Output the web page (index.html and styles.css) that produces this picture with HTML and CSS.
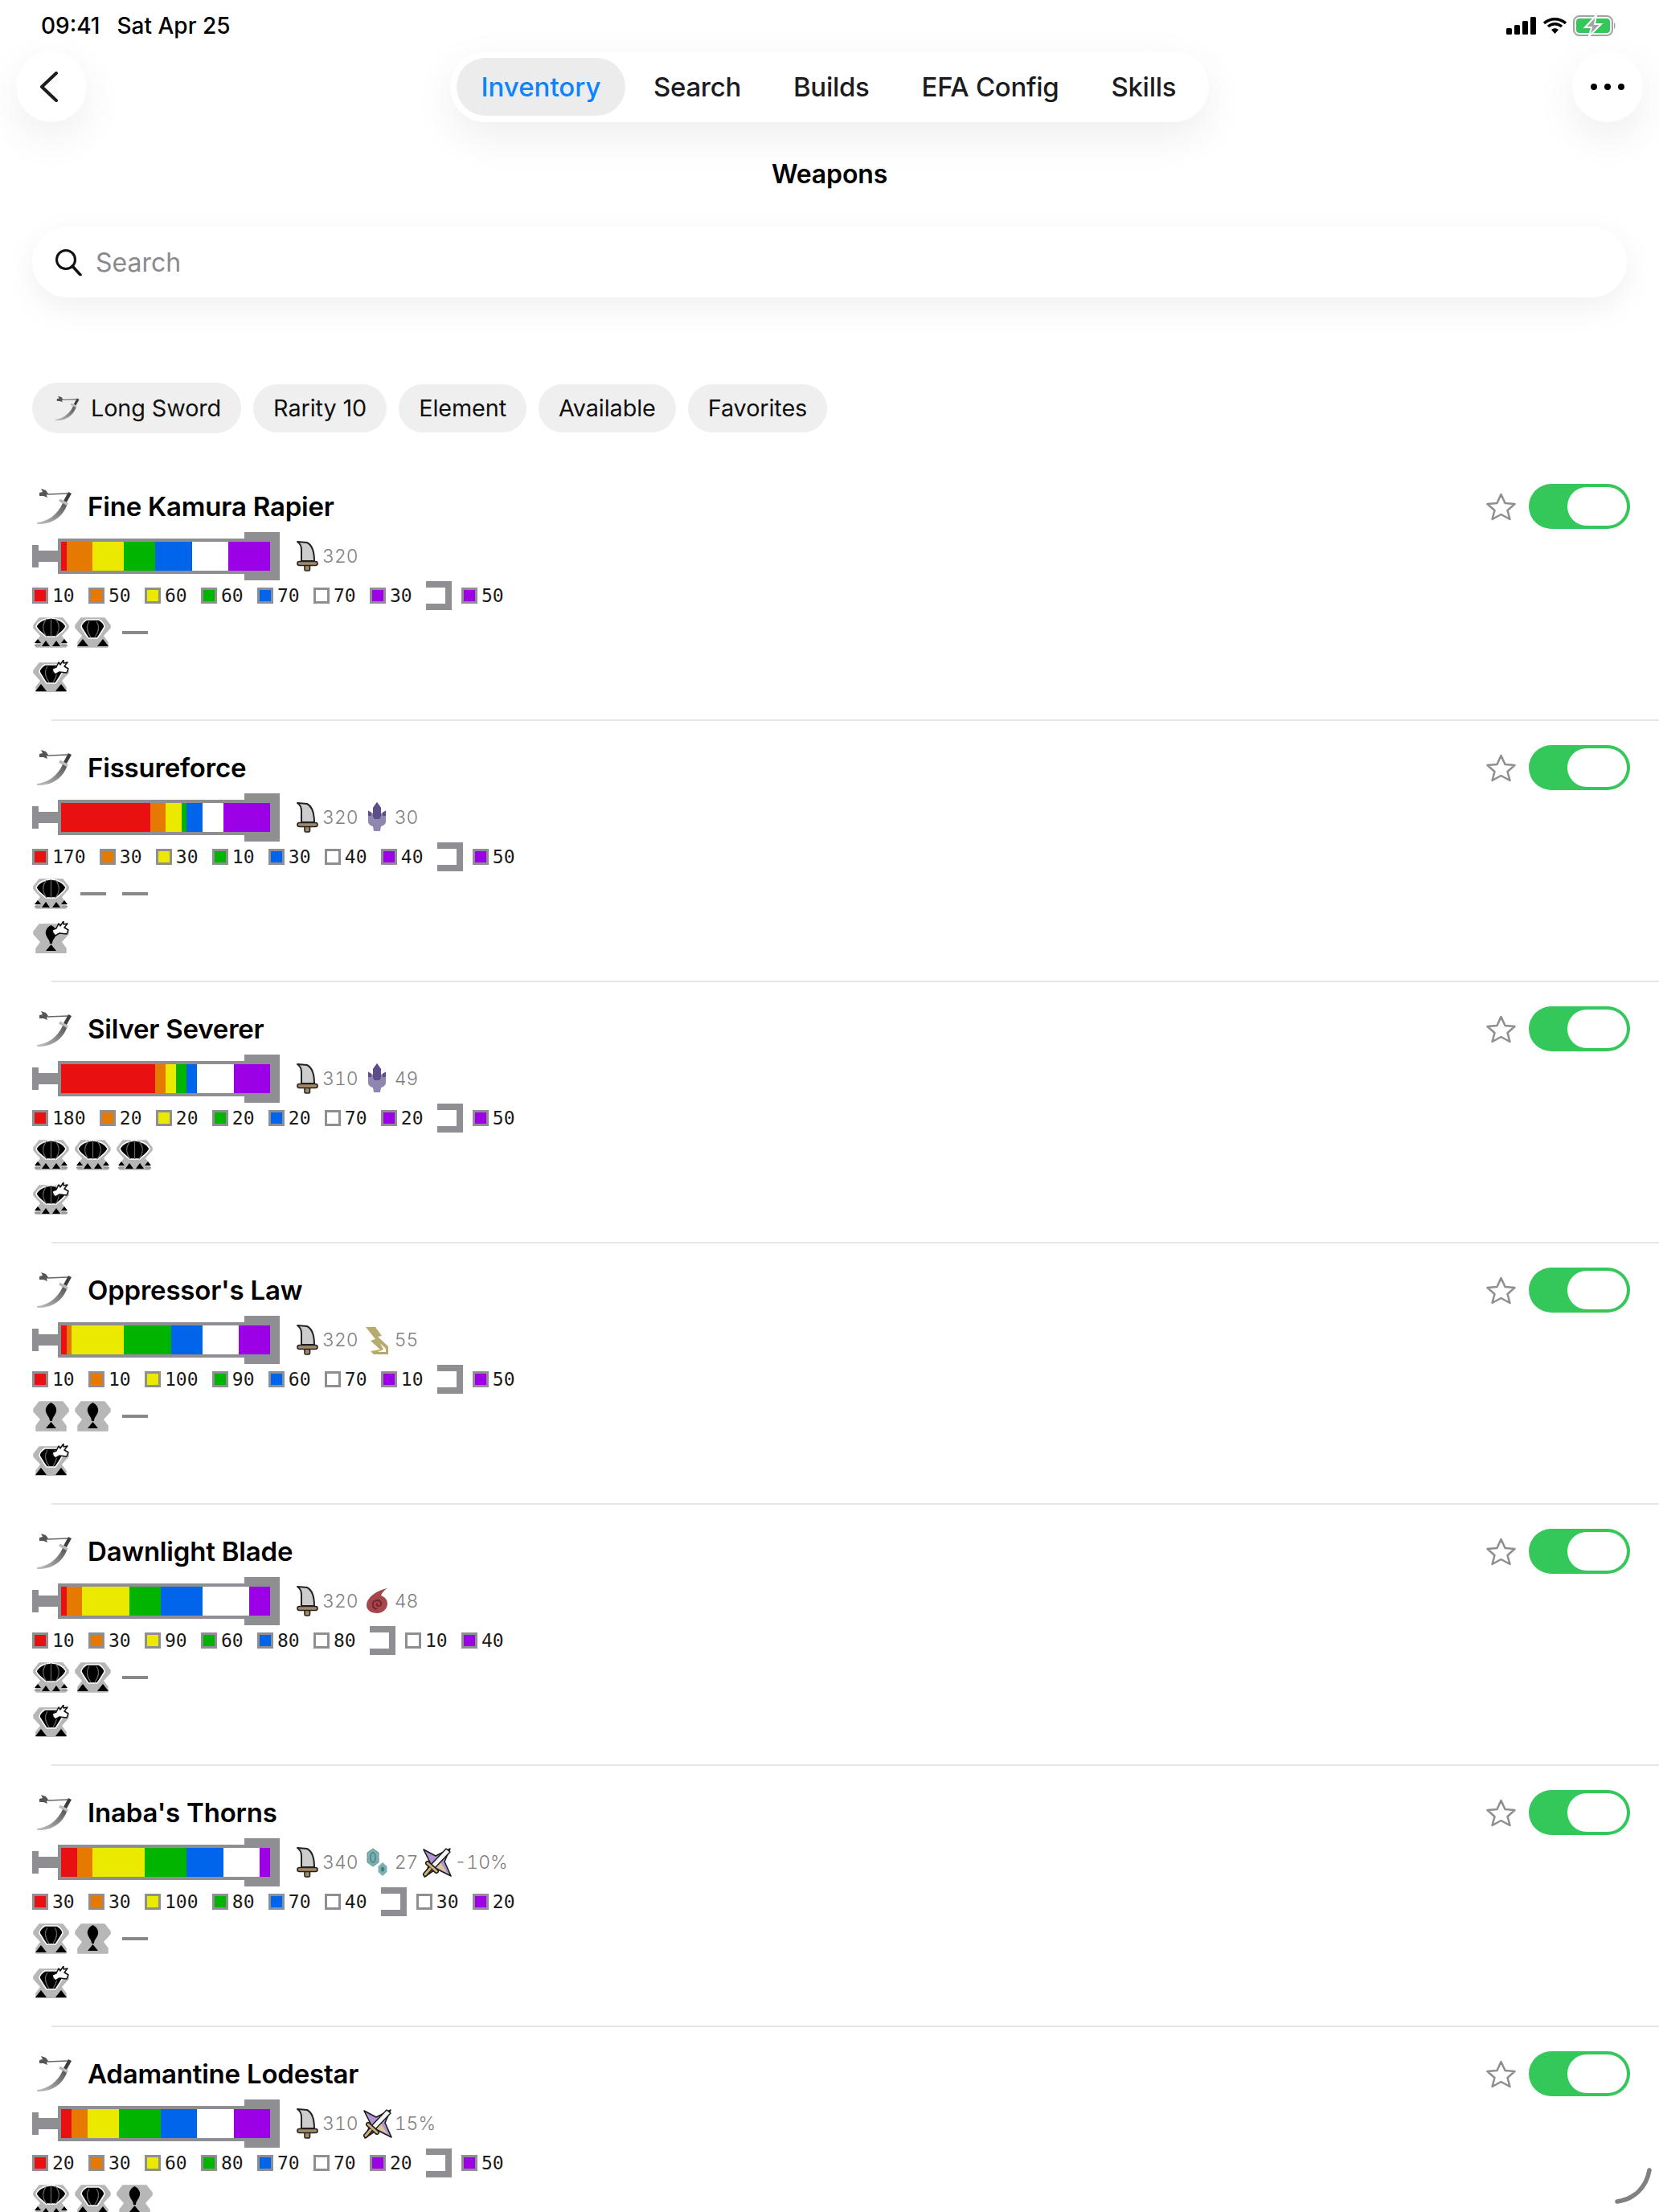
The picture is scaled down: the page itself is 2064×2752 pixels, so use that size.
FILE: index.html
```html
<!DOCTYPE html>
<html lang="en">
<head>
    <meta charset="UTF-8">
    <title>Weapons</title>
    <link rel="stylesheet" href="styles.css">
</head>
<body>
<svg class="defs" width="0" height="0">
    <defs>
        <linearGradient id="bladeGrad" x1="1" y1="0" x2="0" y2="1">
            <stop offset="0" stop-color="#555"/>
            <stop offset="1" stop-color="#c4c4c4"/>
        </linearGradient>
    </defs>
    <symbol id="ls" viewBox="0 0 46 46">
        <path d="M4 6 8 5 6 1 12 3 15 7 13 9 14 12 9 10 4 10Z" fill="#555"/>
        <path d="M14 8 39 7" stroke="#666" stroke-width="1.600" fill="none"/>
        <path d="M42 6 36 17" stroke="#3e3e3e" stroke-width="4.500" fill="none"/>
        <path d="M29 15 39 21" stroke="#b9b9b9" stroke-width="3.500" fill="none"/>
        <path d="M33 19 38 22C33 36 19 46 1 45L1 43C14 42 27 33 33 19Z" fill="url(#bladeGrad)"/>
    </symbol>
    <symbol id="sword" viewBox="0 0 27 38">
        <path d="M1 1 13 2C19 5 22 14 22 25H6V11C6 7 4 3 1 1Z" fill="#cdcdcd" stroke="#222" stroke-width="2" stroke-linejoin="round"/>
        <rect x="10" y="30" width="6.500" height="7" rx="1.500" fill="#a58a68" stroke="#222" stroke-width="1.600"/>
        <rect x="1" y="25.500" width="25" height="5" rx="2.500" fill="#a58a68" stroke="#222" stroke-width="1.600"/>
    </symbol>
    <symbol id="dragon" viewBox="0 0 40 40">
        <path d="M20 1 25 8V15L31 11.500V25C31 29 26 31 25 31L24 37H16L15 31C14 31 9 29 9 25V11.500L15 15V8Z" fill="#8f87b0"/>
        <path d="M20 1 25 8V19L23 22H17L15 19V8ZM9 11.500 13 14V18H9ZM31 11.500 27 14V18H31Z" fill="#5d4e89"/>
    </symbol>
    <symbol id="thunder" viewBox="0 0 40 40">
        <path d="M6 4H18L26 15 21 16 34 28V38H16L12 34 24 32 12 21 18 19Z" fill="#b6aa6c"/>
        <path d="M24 24 31 31V35H21L28 32Z" fill="#fff"/>
    </symbol>
    <symbol id="fire" viewBox="0 0 40 40">
        <path d="M33 4C26 5 8 12 7 25 7 32 14 35 20 35 28 35 33 29 33 23 33 17 28 14 25 13 26 10 29 6 33 4Z" fill="#a5464c"/>
        <path d="M20 30C13 29 13 20 20 19 26 19 27 26 22 26 19 26 19 23 21 23" fill="none" stroke="#74262c" stroke-width="2"/>
    </symbol>
    <symbol id="ice" viewBox="0 0 40 40">
        <path d="M15 3 22 8V20L15 25 8 20V8Z" fill="#7fb0b0" stroke="#5f9696" stroke-width="1"/>
        <ellipse cx="15" cy="14" rx="3" ry="6" fill="none" stroke="#4f8c8c" stroke-width="2"/>
        <path d="M27 20 32.500 25V32L27 37 21.500 32V25Z" fill="#7fb0b0"/>
        <ellipse cx="27" cy="28.500" rx="2" ry="3" fill="#3f7f7f"/>
    </symbol>
    <symbol id="affinity" viewBox="0 0 40 40">
        <path d="M4 4 19 12 37 3 30 19 38 37 20 28 5 38 12 20Z" fill="#b094d4" stroke="#1c1c1c" stroke-width="1.600" stroke-linejoin="round"/>
        <path d="M30 11 25 20 33 33 20 26 13 29Z" fill="#dcc992"/>
        <path d="M32 3 37 7 18 27 13 23Z" fill="#f5f5f5" stroke="#1c1c1c" stroke-width="1.500" stroke-linejoin="round"/>
        <path d="M9 21 20 31M12 28 6 35" fill="none" stroke="#1c1c1c" stroke-width="6" stroke-linecap="round"/>
        <path d="M9 21 20 31M12 28 6 35" fill="none" stroke="#cdaf7c" stroke-width="3" stroke-linecap="round"/>
    </symbol>
    <symbol id="slotbase" viewBox="0 0 45 38">
        <path d="M8 1H37L44 10V13L35 23 41 31V37H4V31L10 23 1 13V10Z" fill="#b7b7b7" stroke="#b7b7b7" stroke-width="1.500" stroke-linejoin="round"/>
    </symbol>
    <symbol id="slot1" viewBox="0 0 45 38">
        <use href="#slotbase" width="45" height="38"/>
        <path d="M22.500 2C27 4 30 9 29 13 28 18 24 20 24 25H21C21 20 17 18 16 13 15 9 18 4 22.500 2Z"/>
        <path d="M22.500 26 29 34H16Z"/>
    </symbol>
    <symbol id="slot2" viewBox="0 0 45 38">
        <use href="#slotbase" width="45" height="38"/>
        <path d="M15 3H30C34 5 37 9 37 12 34 17 31 22 28 26H17C14 22 11 17 8 12 8 9 11 5 15 3Z" stroke="#fff" stroke-width="1.500"/>
        <path d="M18 5C14 11 15 18 20 25M27 5C31 11 30 18 25 25" fill="none" stroke="#666" stroke-width="1.200"/>
        <path d="M10 27 17 36H3ZM35 27 42 36H28Z"/>
    </symbol>
    <symbol id="slot3" viewBox="0 0 45 38">
        <use href="#slotbase" width="45" height="38"/>
        <path d="M22.500 1C30 1 38 5 41 11 40 16 33 20 29 24H16C12 20 5 16 4 11 7 5 15 1 22.500 1Z" stroke="#fff" stroke-width="1.500"/>
        <path d="M17 2C11 9 12 17 17 24M28 2C34 9 33 17 28 24M22.500 1V24" fill="none" stroke="#666" stroke-width="1.200"/>
        <path d="M6 27 10 32H2ZM16 29 21 36H11ZM29 29 34 36H24ZM39 27 43 32H35Z"/>
        <path d="M2 34H9V36H2ZM36 34H43V36H36Z" fill="#999"/>
    </symbol>
    <symbol id="ramp1" viewBox="0 -3 45 40">
        <use href="#slot1" y="0" width="45" height="38"/>
        <path d="M24 8 29 6 32 0 34 3 38 -3 38 1 43 0 39 5 44 8 42 13 33 12 28 15 25 12Z" fill="#fff" stroke="#111" stroke-width="1.500" stroke-linejoin="round"/>
    </symbol>
    <symbol id="ramp2" viewBox="0 -3 45 40">
        <use href="#slot2" y="0" width="45" height="38"/>
        <path d="M24 8 29 6 32 0 34 3 38 -3 38 1 43 0 39 5 44 8 42 13 33 12 28 15 25 12Z" fill="#fff" stroke="#111" stroke-width="1.500" stroke-linejoin="round"/>
    </symbol>
    <symbol id="ramp3" viewBox="0 -3 45 40">
        <use href="#slot3" y="0" width="45" height="38"/>
        <path d="M24 8 29 6 32 0 34 3 38 -3 38 1 43 0 39 5 44 8 42 13 33 12 28 15 25 12Z" fill="#fff" stroke="#111" stroke-width="1.500" stroke-linejoin="round"/>
    </symbol>
    <symbol id="star" viewBox="0 0 37 35">
        <path d="M18.500 2 23.500 13 35.500 14 26.500 22 29.500 33 18.500 27 7.500 33 10.500 22 1.500 14 13.500 13Z" fill="#fff" stroke="#8e8e93" stroke-width="2.500" stroke-linejoin="round"/>
    </symbol>
</svg>

<div class="page">
    <div class="status">
        <div class="clock"><span>09:41</span><span>Sat Apr 25</span></div>
        <div class="status-icons">
            <svg width="38" height="22" viewBox="0 0 38 22"><rect x="0" y="14" width="7" height="8" rx="1.500"/><rect x="10" y="10" width="7" height="12" rx="1.500"/><rect x="20" y="5" width="7" height="17" rx="1.500"/><rect x="30" y="0" width="7" height="22" rx="1.500"/></svg>
            <svg width="29" height="20" viewBox="0 0 29 20"><path d="M1 7C9 0 20 0 28 7" fill="none" stroke="#000" stroke-width="3.500"/><path d="M6 11C11 6.500 18 6.500 23 11" fill="none" stroke="#000" stroke-width="3.500"/><path d="M14.500 20 10 15C13 12.500 16 12.500 19 15Z"/></svg>
            <svg width="54" height="26" viewBox="0 0 54 26">
                <rect x="1" y="1" width="48" height="24" rx="7" fill="#fff" stroke="#a3a3a3" stroke-width="2"/>
                <rect x="4" y="4" width="42" height="18" rx="4" fill="#34c759"/>
                <path d="M51 9C53 10 53 16 51 17Z" fill="#a3a3a3"/>
                <path d="M29 0 15 15H23L20 26 35 11H27Z" fill="#a3a3a3" stroke="#fff" stroke-width="2"/>
            </svg>
        </div>
    </div>

    <div class="nav">
        <button class="round-btn">
            <svg class="back-icon" width="24" height="38" viewBox="0 0 24 38"><path d="M20 2 2 19 20 36" fill="none" stroke="#1c1c1e" stroke-width="4" stroke-linecap="round" stroke-linejoin="round"/></svg>
        </button>
        <div class="tabs">
            <span class="tab active">Inventory</span>
            <span class="tab">Search</span>
            <span class="tab">Builds</span>
            <span class="tab">EFA Config</span>
            <span class="tab">Skills</span>
        </div>
        <button class="round-btn">
            <svg width="42" height="8" viewBox="0 0 42 8"><circle cx="4" cy="4" r="4"/><circle cx="21" cy="4" r="4"/><circle cx="38" cy="4" r="4"/></svg>
        </button>
    </div>

    <h1 class="page-title">Weapons</h1>

    <div class="search">
        <svg width="34" height="34" viewBox="0 0 34 34"><circle cx="14" cy="14" r="11.500" fill="none" stroke="#111" stroke-width="3"/><path d="M22 22 32 33" stroke="#111" stroke-width="3.500" stroke-linecap="round"/></svg>
        <span>Search</span>
    </div>

    <div class="chips">
        <span class="chip first"><svg class="chip-icon"><use href="#ls"/></svg>Long Sword</span>
        <span class="chip">Rarity 10</span>
        <span class="chip">Element</span>
        <span class="chip">Available</span>
        <span class="chip">Favorites</span>
    </div>

    <!-- weapons -->
    <div class="weapon">
        <div class="head">
            <div class="name"><svg class="type-icon"><use href="#ls"/></svg>Fine Kamura Rapier</div>
            <div class="actions"><svg class="star"><use href="#star"/></svg><span class="toggle"><i></i></span></div>
        </div>
        <div class="stats">
            <div class="bar"><i class="cap"></i><i class="stem"></i>
                <div class="tube"><i class="red" style="flex:10"></i><i class="orange" style="flex:50"></i><i class="yellow" style="flex:60"></i><i class="green" style="flex:60"></i><i class="blue" style="flex:70"></i><i class="white" style="flex:70"></i><i class="purple" style="flex:80"></i></div>
            </div>
            <svg class="atk-icon"><use href="#sword"/></svg><span class="val">320</span>
        </div>
        <div class="sharp">
            <span class="hit"><i class="red"></i>10</span><span class="hit"><i class="orange"></i>50</span><span class="hit"><i class="yellow"></i>60</span><span class="hit"><i class="green"></i>60</span><span class="hit"><i class="blue"></i>70</span><span class="hit"><i class="white"></i>70</span><span class="hit"><i class="purple"></i>30</span><i class="notch"></i><span class="hit"><i class="purple"></i>50</span>
        </div>
        <div class="slots"><svg class="slot"><use href="#slot3"/></svg><svg class="slot"><use href="#slot2"/></svg><span class="slot empty"></span></div>
        <svg class="ramp"><use href="#ramp2"/></svg>
    </div>
    <hr>

    <div class="weapon">
        <div class="head">
            <div class="name"><svg class="type-icon"><use href="#ls"/></svg>Fissureforce</div>
            <div class="actions"><svg class="star"><use href="#star"/></svg><span class="toggle"><i></i></span></div>
        </div>
        <div class="stats">
            <div class="bar"><i class="cap"></i><i class="stem"></i>
                <div class="tube"><i class="red" style="flex:170"></i><i class="orange" style="flex:30"></i><i class="yellow" style="flex:30"></i><i class="green" style="flex:10"></i><i class="blue" style="flex:30"></i><i class="white" style="flex:40"></i><i class="purple" style="flex:90"></i></div>
            </div>
            <svg class="atk-icon"><use href="#sword"/></svg><span class="val">320</span>
            <svg class="el-icon"><use href="#dragon"/></svg><span class="val">30</span>
        </div>
        <div class="sharp">
            <span class="hit"><i class="red"></i>170</span><span class="hit"><i class="orange"></i>30</span><span class="hit"><i class="yellow"></i>30</span><span class="hit"><i class="green"></i>10</span><span class="hit"><i class="blue"></i>30</span><span class="hit"><i class="white"></i>40</span><span class="hit"><i class="purple"></i>40</span><i class="notch"></i><span class="hit"><i class="purple"></i>50</span>
        </div>
        <div class="slots"><svg class="slot"><use href="#slot3"/></svg><span class="slot empty"></span><span class="slot empty"></span></div>
        <svg class="ramp"><use href="#ramp1"/></svg>
    </div>
    <hr>

    <div class="weapon">
        <div class="head">
            <div class="name"><svg class="type-icon"><use href="#ls"/></svg>Silver Severer</div>
            <div class="actions"><svg class="star"><use href="#star"/></svg><span class="toggle"><i></i></span></div>
        </div>
        <div class="stats">
            <div class="bar"><i class="cap"></i><i class="stem"></i>
                <div class="tube"><i class="red" style="flex:180"></i><i class="orange" style="flex:20"></i><i class="yellow" style="flex:20"></i><i class="green" style="flex:20"></i><i class="blue" style="flex:20"></i><i class="white" style="flex:70"></i><i class="purple" style="flex:70"></i></div>
            </div>
            <svg class="atk-icon"><use href="#sword"/></svg><span class="val">310</span>
            <svg class="el-icon"><use href="#dragon"/></svg><span class="val">49</span>
        </div>
        <div class="sharp">
            <span class="hit"><i class="red"></i>180</span><span class="hit"><i class="orange"></i>20</span><span class="hit"><i class="yellow"></i>20</span><span class="hit"><i class="green"></i>20</span><span class="hit"><i class="blue"></i>20</span><span class="hit"><i class="white"></i>70</span><span class="hit"><i class="purple"></i>20</span><i class="notch"></i><span class="hit"><i class="purple"></i>50</span>
        </div>
        <div class="slots"><svg class="slot"><use href="#slot3"/></svg><svg class="slot"><use href="#slot3"/></svg><svg class="slot"><use href="#slot3"/></svg></div>
        <svg class="ramp"><use href="#ramp3"/></svg>
    </div>
    <hr>

    <div class="weapon">
        <div class="head">
            <div class="name"><svg class="type-icon"><use href="#ls"/></svg>Oppressor's Law</div>
            <div class="actions"><svg class="star"><use href="#star"/></svg><span class="toggle"><i></i></span></div>
        </div>
        <div class="stats">
            <div class="bar"><i class="cap"></i><i class="stem"></i>
                <div class="tube"><i class="red" style="flex:10"></i><i class="orange" style="flex:10"></i><i class="yellow" style="flex:100"></i><i class="green" style="flex:90"></i><i class="blue" style="flex:60"></i><i class="white" style="flex:70"></i><i class="purple" style="flex:60"></i></div>
            </div>
            <svg class="atk-icon"><use href="#sword"/></svg><span class="val">320</span>
            <svg class="el-icon"><use href="#thunder"/></svg><span class="val">55</span>
        </div>
        <div class="sharp">
            <span class="hit"><i class="red"></i>10</span><span class="hit"><i class="orange"></i>10</span><span class="hit"><i class="yellow"></i>100</span><span class="hit"><i class="green"></i>90</span><span class="hit"><i class="blue"></i>60</span><span class="hit"><i class="white"></i>70</span><span class="hit"><i class="purple"></i>10</span><i class="notch"></i><span class="hit"><i class="purple"></i>50</span>
        </div>
        <div class="slots"><svg class="slot"><use href="#slot1"/></svg><svg class="slot"><use href="#slot1"/></svg><span class="slot empty"></span></div>
        <svg class="ramp"><use href="#ramp2"/></svg>
    </div>
    <hr>

    <div class="weapon">
        <div class="head">
            <div class="name"><svg class="type-icon"><use href="#ls"/></svg>Dawnlight Blade</div>
            <div class="actions"><svg class="star"><use href="#star"/></svg><span class="toggle"><i></i></span></div>
        </div>
        <div class="stats">
            <div class="bar"><i class="cap"></i><i class="stem"></i>
                <div class="tube"><i class="red" style="flex:10"></i><i class="orange" style="flex:30"></i><i class="yellow" style="flex:90"></i><i class="green" style="flex:60"></i><i class="blue" style="flex:80"></i><i class="white" style="flex:90"></i><i class="purple" style="flex:40"></i></div>
            </div>
            <svg class="atk-icon"><use href="#sword"/></svg><span class="val">320</span>
            <svg class="el-icon"><use href="#fire"/></svg><span class="val">48</span>
        </div>
        <div class="sharp">
            <span class="hit"><i class="red"></i>10</span><span class="hit"><i class="orange"></i>30</span><span class="hit"><i class="yellow"></i>90</span><span class="hit"><i class="green"></i>60</span><span class="hit"><i class="blue"></i>80</span><span class="hit"><i class="white"></i>80</span><i class="notch"></i><span class="hit"><i class="white"></i>10</span><span class="hit"><i class="purple"></i>40</span>
        </div>
        <div class="slots"><svg class="slot"><use href="#slot3"/></svg><svg class="slot"><use href="#slot2"/></svg><span class="slot empty"></span></div>
        <svg class="ramp"><use href="#ramp2"/></svg>
    </div>
    <hr>

    <div class="weapon">
        <div class="head">
            <div class="name"><svg class="type-icon"><use href="#ls"/></svg>Inaba's Thorns</div>
            <div class="actions"><svg class="star"><use href="#star"/></svg><span class="toggle"><i></i></span></div>
        </div>
        <div class="stats">
            <div class="bar"><i class="cap"></i><i class="stem"></i>
                <div class="tube"><i class="red" style="flex:30"></i><i class="orange" style="flex:30"></i><i class="yellow" style="flex:100"></i><i class="green" style="flex:80"></i><i class="blue" style="flex:70"></i><i class="white" style="flex:70"></i><i class="purple" style="flex:20"></i></div>
            </div>
            <svg class="atk-icon"><use href="#sword"/></svg><span class="val">340</span>
            <svg class="el-icon"><use href="#ice"/></svg><span class="val">27</span>
            <svg class="el-icon"><use href="#affinity"/></svg><span class="val">-10%</span>
        </div>
        <div class="sharp">
            <span class="hit"><i class="red"></i>30</span><span class="hit"><i class="orange"></i>30</span><span class="hit"><i class="yellow"></i>100</span><span class="hit"><i class="green"></i>80</span><span class="hit"><i class="blue"></i>70</span><span class="hit"><i class="white"></i>40</span><i class="notch"></i><span class="hit"><i class="white"></i>30</span><span class="hit"><i class="purple"></i>20</span>
        </div>
        <div class="slots"><svg class="slot"><use href="#slot2"/></svg><svg class="slot"><use href="#slot1"/></svg><span class="slot empty"></span></div>
        <svg class="ramp"><use href="#ramp2"/></svg>
    </div>
    <hr>

    <div class="weapon">
        <div class="head">
            <div class="name"><svg class="type-icon"><use href="#ls"/></svg>Adamantine Lodestar</div>
            <div class="actions"><svg class="star"><use href="#star"/></svg><span class="toggle"><i></i></span></div>
        </div>
        <div class="stats">
            <div class="bar"><i class="cap"></i><i class="stem"></i>
                <div class="tube"><i class="red" style="flex:20"></i><i class="orange" style="flex:30"></i><i class="yellow" style="flex:60"></i><i class="green" style="flex:80"></i><i class="blue" style="flex:70"></i><i class="white" style="flex:70"></i><i class="purple" style="flex:70"></i></div>
            </div>
            <svg class="atk-icon"><use href="#sword"/></svg><span class="val">310</span>
            <svg class="el-icon"><use href="#affinity"/></svg><span class="val">15%</span>
        </div>
        <div class="sharp">
            <span class="hit"><i class="red"></i>20</span><span class="hit"><i class="orange"></i>30</span><span class="hit"><i class="yellow"></i>60</span><span class="hit"><i class="green"></i>80</span><span class="hit"><i class="blue"></i>70</span><span class="hit"><i class="white"></i>70</span><span class="hit"><i class="purple"></i>20</span><i class="notch"></i><span class="hit"><i class="purple"></i>50</span>
        </div>
        <div class="slots"><svg class="slot"><use href="#slot3"/></svg><svg class="slot"><use href="#slot2"/></svg><svg class="slot"><use href="#slot1"/></svg></div>
    </div>

    <!-- scroll corner -->
    <svg class="scroll-arc" width="48" height="48" viewBox="0 0 48 48"><path d="M4 43C25 40 40 26 44 4" fill="none" stroke="#808080" stroke-width="5.500" stroke-linecap="round"/></svg>
</div>
</body>
</html>
```

FILE: styles.css
```css
html, body { margin: 0; height: 2752px; overflow: hidden; background: #fff; }
body { font-family: Inter, "Liberation Sans", sans-serif; color: #000; }
.defs { position: absolute; }
.page { position: relative; height: 2752px; overflow: hidden; }

.status { height: 64px; padding: 0 53px 0 51px; display: flex; justify-content: space-between; align-items: center; box-sizing: border-box; }
.clock { display: flex; gap: 21px; font-size: 28px; font-weight: 500; }
.status-icons { display: flex; align-items: center; gap: 8px; }

.nav { height: 88px; padding: 0 20px; display: flex; justify-content: space-between; }
.round-btn {
    width: 88px; height: 88px; padding: 0; border: none; border-radius: 50%;
    background: #fff; box-shadow: 0 18px 54px #00000012;
    display: flex; align-items: center; justify-content: center;
}
.back-icon { margin-right: 5px; }
.tabs {
    width: 944px; height: 88px; box-sizing: border-box; padding: 0 8px;
    background: #fff; border-radius: 44px; box-shadow: 0 18px 54px #00000012;
    display: flex; align-items: center; gap: 5px;
}
.tab { height: 72px; line-height: 72px; padding: 0 30px; border-radius: 36px; font-size: 33px; font-weight: 500; letter-spacing: -0.3px; color: #1c1c1e; white-space: nowrap; }
.tab.active { background: #ececec; color: #0a84ff; letter-spacing: 0; padding: 0 30.500px; }

.page-title { margin: 0; height: 130px; line-height: 130px; text-align: center; font-size: 32px; font-weight: 600; letter-spacing: -0.15px; }

.search {
    margin: 0 40px; height: 88px; border-radius: 44px; padding-left: 28px;
    background: #fff; box-shadow: 0 12px 40px #00000010;
    display: flex; align-items: center; gap: 17px;
    font-size: 32px; color: #8a8a8e;
}

.chips { margin: 106px 40px 0; height: 63px; display: flex; align-items: center; gap: 15px; }
.chip { height: 60px; line-height: 60px; padding: 0 25px; border-radius: 30px; background: #efefef; font-size: 28.800px; letter-spacing: -0.1px; color: #111; }
.chip.first { height: 63px; line-height: 63px; padding-left: 28px; display: flex; align-items: center; gap: 13px; border-radius: 32px; }
.chip-icon { width: 32px; height: 32px; }

.weapon { height: 323px; padding: 30px 36px 0 40px; margin-top: 33px; box-sizing: border-box; }
hr + .weapon { margin-top: 0; }
hr { height: 2px; margin: 0 0 0 64px; border: none; background: #e6e6e6; }

.head { height: 56px; display: flex; justify-content: space-between; align-items: center; }
.name { display: flex; align-items: center; gap: 18px; padding-left: 5px; font-size: 33px; font-weight: 600; letter-spacing: -0.2px; }
.type-icon { width: 46px; height: 46px; }
.actions { display: flex; align-items: center; gap: 16px; }
.star { width: 37px; height: 35px; }
.toggle { width: 126px; height: 56px; border-radius: 28px; background: #34c759; padding: 4px; box-sizing: border-box; display: flex; justify-content: flex-end; }
.toggle i { width: 74px; height: 48px; border-radius: 24px; background: #fff; }

.stats { height: 60px; margin-top: 4px; display: flex; align-items: center; }
.bar { width: 308px; height: 60px; display: flex; align-items: center; }
.cap { width: 8px; height: 28px; background: #8f8e93; }
.stem { width: 24px; height: 14px; background: #8f8e93; }
.tube {
    position: relative; width: 276px; height: 44px; box-sizing: border-box;
    border: 4px solid #8f8e93; border-right-width: 12px; display: flex;
}
.tube::before, .tube::after { content: ""; position: absolute; left: 228px; width: 44px; height: 8px; background: #8f8e93; }
.tube::before { top: -12px; }
.tube::after { bottom: -12px; }
.tube i { display: block; }

.red { background: #e81010; }
.orange { background: #e67a00; }
.yellow { background: #ebe900; }
.green { background: #00b400; }
.blue { background: #0065ea; }
.white { background: #fff; }
.purple { background: #9b00e6; }

.atk-icon { width: 27px; height: 38px; margin: 0 5px 0 21px; }
.el-icon { width: 40px; height: 40px; margin: 0 2px 0 3px; }
.val { font-size: 23px; font-weight: 300; color: #7f7f84; font-variant-numeric: tabular-nums; }

.sharp { height: 36px; margin-top: 1px; display: flex; align-items: center; font-family: "DejaVu Sans Mono", "Liberation Mono", monospace; font-size: 23px; color: #1a1a1a; }
.hit { display: flex; align-items: center; gap: 5px; margin-right: 17.300px; }
.hit i { width: 20px; height: 20px; box-sizing: border-box; border: 3px solid #8f8e93; }
.notch { width: 32px; height: 36px; box-sizing: border-box; border: 8px solid #8f8e93; border-left: none; margin-right: 12px; }

.slots { height: 38px; margin: 9px 0 0 1px; display: flex; gap: 7px; }
.slot { width: 45px; height: 38px; display: block; }
.slot.empty { position: relative; }
.slot.empty::after { content: ""; position: absolute; left: 7px; top: 17px; width: 32px; height: 4px; background: #888; }
.ramp { display: block; width: 45px; height: 40px; margin: 15px 0 0 1px; }

.scroll-arc { position: absolute; left: 2008px; top: 2696px; }
```
